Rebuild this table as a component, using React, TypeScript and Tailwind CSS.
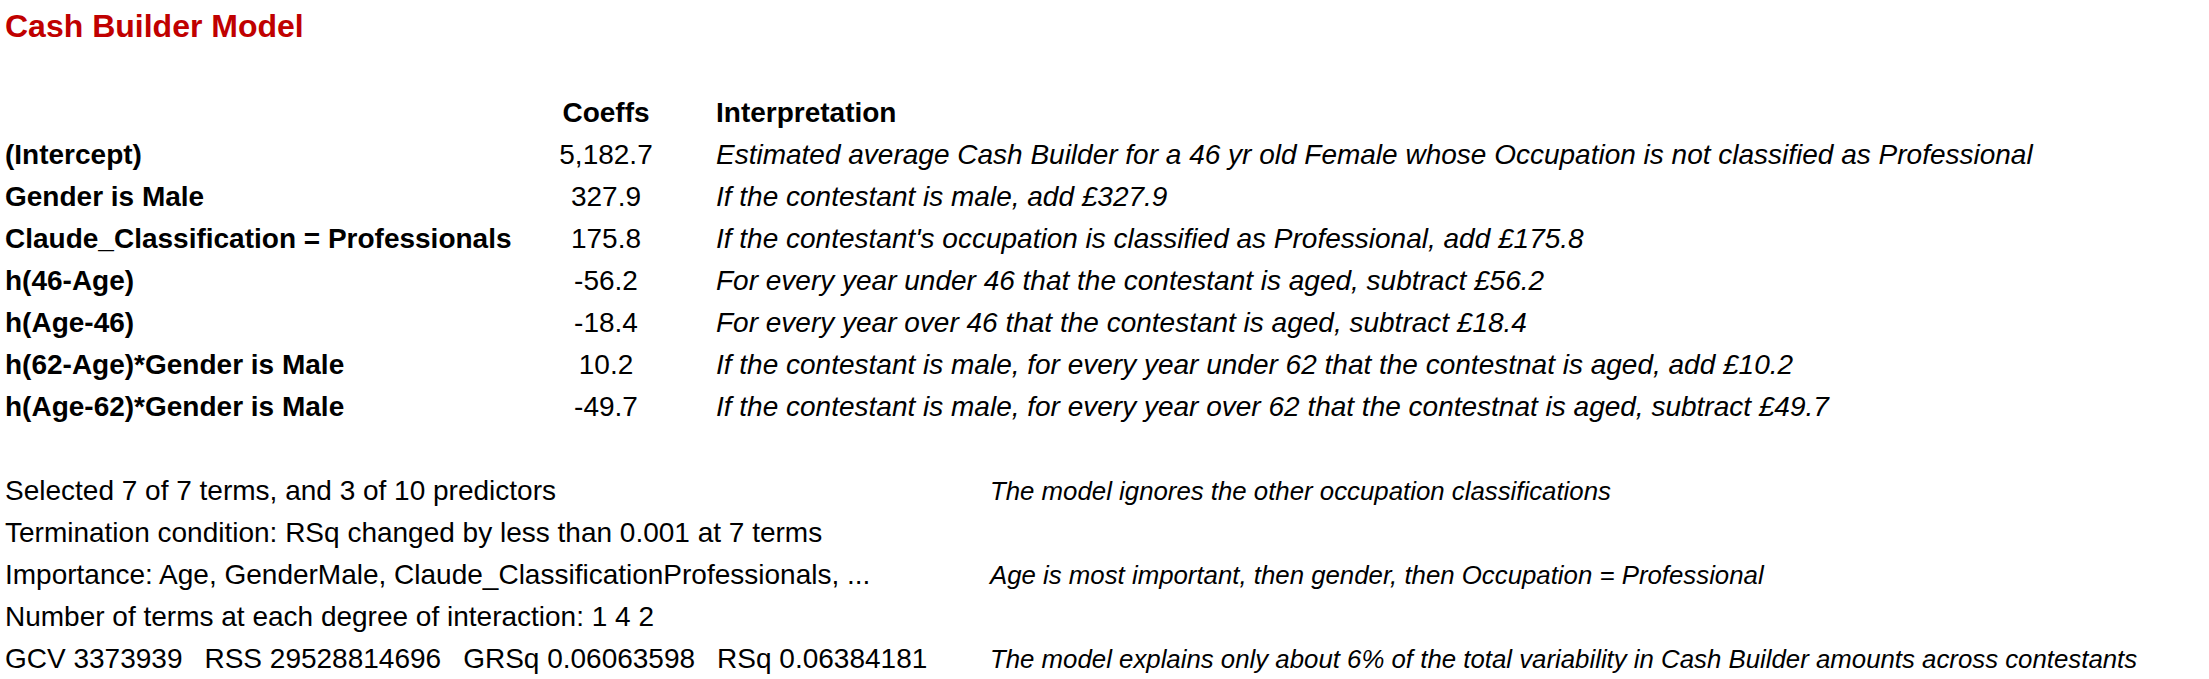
import React from 'react';

const terms = [
  { label: '(Intercept)', coef: '5,182.7', note: 'Estimated average Cash Builder for a 46 yr old Female whose Occupation is not classified as Professional' },
  { label: 'Gender is Male', coef: '327.9', note: 'If the contestant is male, add £327.9' },
  { label: 'Claude_Classification = Professionals', coef: '175.8', note: "If the contestant's occupation is classified as Professional, add £175.8" },
  { label: 'h(46-Age)', coef: '-56.2', note: 'For every year under 46 that the contestant is aged, subtract £56.2' },
  { label: 'h(Age-46)', coef: '-18.4', note: 'For every year over 46 that the contestant is aged, subtract £18.4' },
  { label: 'h(62-Age)*Gender is Male', coef: '10.2', note: 'If the contestant is male, for every year under 62 that the contestnat is aged, add £10.2' },
  { label: 'h(Age-62)*Gender is Male', coef: '-49.7', note: 'If the contestant is male, for every year over 62 that the contestnat is aged, subtract £49.7' },
];

const summary = [
  { text: 'Selected 7 of 7 terms, and 3 of 10 predictors', note: 'The model ignores the other occupation classifications' },
  { text: 'Termination condition: RSq changed by less than 0.001 at 7 terms', note: '' },
  { text: 'Importance: Age, GenderMale, Claude_ClassificationProfessionals, ...', note: 'Age is most important, then gender, then Occupation = Professional' },
  { text: 'Number of terms at each degree of interaction: 1 4 2', note: '' },
];

const stats = ['GCV 3373939', 'RSS 29528814696', 'GRSq 0.06063598', 'RSq 0.06384181'];

const App = () => {
  return (
    <div className="w-[2209px] h-[679px] overflow-hidden bg-white text-black pl-[5px] pt-[4px] font-['Liberation_Sans',Arial,sans-serif] text-[28px] leading-[42px] whitespace-nowrap">
      {/* Title */}
      <div className="h-[46px] leading-[45px] text-[32px] font-bold text-[#c00000]">Cash Builder Model</div>
      <div className="h-[42px]" />

      {/* Coefficients table */}
      <div className="grid grid-cols-[515px_172px_1fr]">
        <div />
        <div className="text-center font-bold">Coeffs</div>
        <div className="pl-[24px] font-bold">Interpretation</div>
        {terms.map((t) => (
          <React.Fragment key={t.label}>
            <div className="font-bold">{t.label}</div>
            <div className="text-center">{t.coef}</div>
            <div className="pl-[24px] italic">{t.note}</div>
          </React.Fragment>
        ))}
      </div>

      <div className="h-[42px]" />

      {/* Model summary */}
      <div className="grid grid-cols-[985px_1fr]">
        {summary.map((s) => (
          <React.Fragment key={s.text}>
            <div>{s.text}</div>
            <div className="italic text-[25.8px]">{s.note}</div>
          </React.Fragment>
        ))}
        <div className="flex gap-[22px]">
          {stats.map((s) => (
            <span key={s}>{s}</span>
          ))}
        </div>
        <div className="italic text-[25.8px]">The model explains only about 6% of the total variability in Cash Builder amounts across contestants</div>
      </div>
    </div>
  );
};

export default App;
